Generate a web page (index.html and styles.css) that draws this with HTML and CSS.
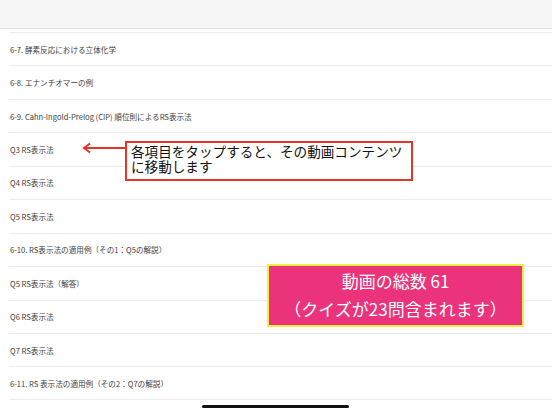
FILE: index.html
```html
<!DOCTYPE html>
<html lang="ja">
<head>
<meta charset="utf-8">
<link rel="stylesheet" href="styles.css">
</head>
<body>
<div class="screen">
  <header class="topbar"></header>
  <ul class="list">
    <li class="row">6-7. 酵素反応における立体化学</li>
    <li class="row">6-8. エナンチオマーの例</li>
    <li class="row">6-9. Cahn-Ingold-Prelog (CIP) 順位則によるRS表示法</li>
    <li class="row">Q3 RS表示法</li>
    <li class="row">Q4 RS表示法</li>
    <li class="row">Q5 RS表示法</li>
    <li class="row">6-10. RS表示法の適用例（その1：Q5の解説）</li>
    <li class="row">Q5 RS表示法（解答）</li>
    <li class="row">Q6 RS表示法</li>
    <li class="row">Q7 RS表示法</li>
    <li class="row">6-11. RS 表示法の適用例（その2：Q7の解説）</li>
  </ul>

  <svg class="arrow" width="46" height="12" viewBox="0 0 46 12">
    <path d="M4 6 H44" stroke="#e5352b" stroke-width="2" fill="none"/>
    <path d="M9 1.5 L3 6 L9 10.5" stroke="#e5352b" stroke-width="2" fill="none" stroke-linejoin="miter"/>
  </svg>
  <div class="callout">
    <div class="callout-line">各項目をタップすると、その動画コンテンツ</div>
    <div class="callout-line">に移動します</div>
  </div>

  <div class="total">
    <div class="total-line">動画の総数 61</div>
    <div class="total-line">（クイズが23問含まれます）</div>
  </div>

  <div class="home-indicator"></div>
</div>
</body>
</html>
```

FILE: styles.css
```css
* { box-sizing: border-box; }
html, body {
  margin: 0;
  padding: 0;
  background: #ffffff;
}
body {
  font-family: "Noto Sans CJK JP", "Noto Sans", sans-serif;
}
.screen {
  position: relative;
  width: 552px;
  height: 414px;
  overflow: hidden;
  background: #ffffff;
}
.topbar {
  height: 29px;
  background: #f6f6f6;
  border-bottom: 1px solid #e4e4e4;
}
.list {
  list-style: none;
  margin: 3px 0 0 0;
  padding: 0 0 0 9px;
}
.row {
  height: 33.45px;
  border-top: 1px solid #ebebeb;
  display: flex;
  align-items: center;
  padding-left: 1px;
  font-size: 7.6px;
  color: #404040;
  white-space: nowrap;
}
.row:last-child {
  border-bottom: 1px solid #ebebeb;
}
.arrow {
  position: absolute;
  left: 81px;
  top: 142px;
}
.callout {
  position: absolute;
  left: 125px;
  top: 141px;
  width: 288px;
  height: 40px;
  border: 2px solid #e5352b;
  background: #ffffff;
  padding: 1px 0 0 4px;
  color: #111111;
  white-space: nowrap;
}
.callout-line {
  font-size: 13.6px;
  line-height: 14.5px;
  height: 14.5px;
}
.total {
  position: absolute;
  left: 267px;
  top: 264px;
  width: 257px;
  height: 63px;
  border: 2px solid #f6ef3c;
  background: #ea337a;
  color: #ffffff;
  text-align: center;
  padding-top: 1px;
  white-space: nowrap;
}
.total-line {
  font-size: 17px;
  line-height: 28px;
}
.home-indicator {
  position: absolute;
  left: 202px;
  top: 405px;
  width: 147px;
  height: 3px;
  border-radius: 2px;
  background: #111111;
}
```
